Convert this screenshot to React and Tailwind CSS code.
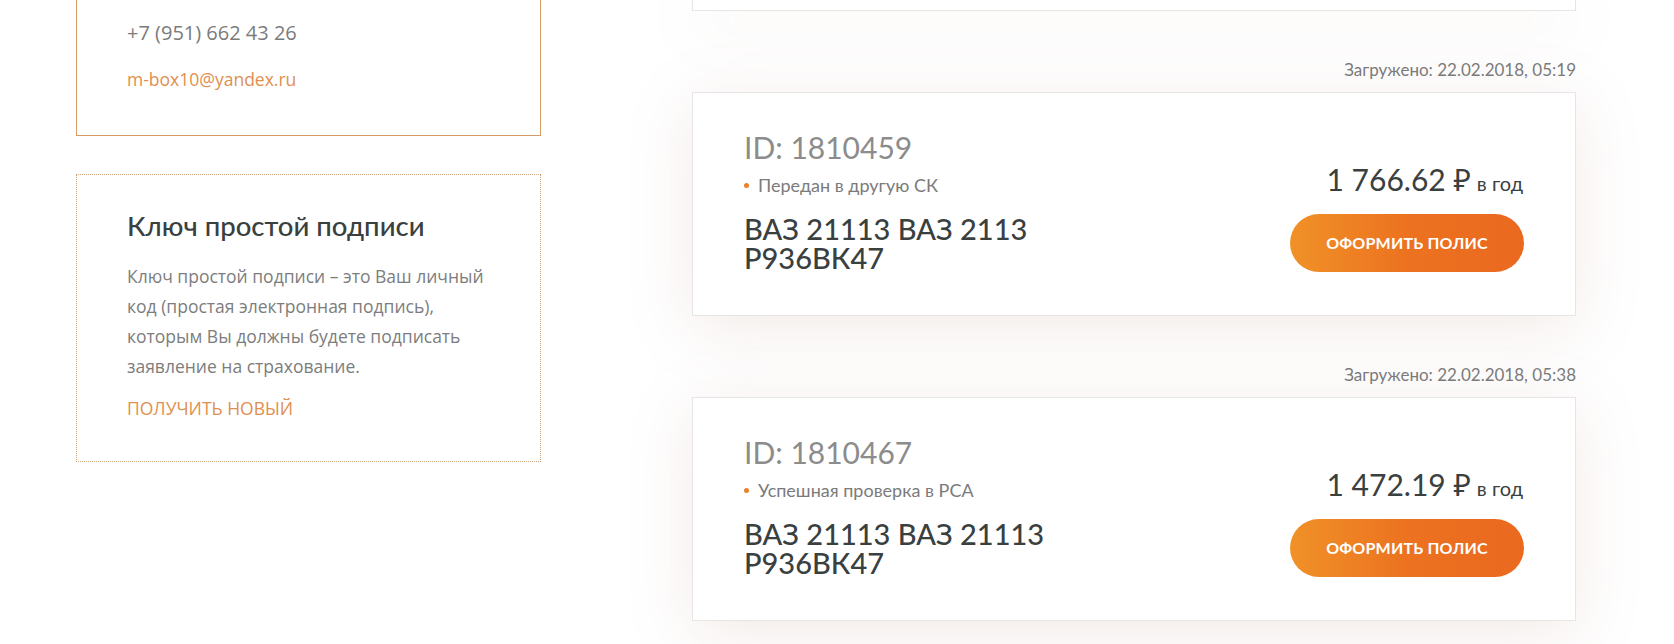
import React from 'react';

const FUTURA = "font-['Lato','Noto_Sans',sans-serif]";
const OPEN = "font-['Open_Sans','Noto_Sans',sans-serif]";

const POLICIES = [
  {
    uploaded: 'Загружено: 22.02.2018, 05:19',
    id: '1810459',
    status: 'Передан в другую СК',
    car: 'ВАЗ 21113 ВАЗ 2113 Р936ВК47',
    price: '1 766.62',
  },
  {
    uploaded: 'Загружено: 22.02.2018, 05:38',
    id: '1810467',
    status: 'Успешная проверка в РСА',
    car: 'ВАЗ 21113 ВАЗ 21113 Р936ВК47',
    price: '1 472.19',
  },
];

const cardShadow = 'shadow-[0_12px_60px_rgba(180,130,110,0.17)]';

function PolicyCard({ policy }) {
  return (
    <>
      <div className={`mt-[47px] mb-[10px] text-right text-[17px] leading-[24px] text-[#7a7a7a] ${FUTURA}`}>
        {policy.uploaded}
      </div>
      <div className={`h-[224px] flex items-end justify-between border border-[#e6e6e6] bg-white px-[51px] pb-[43px] ${cardShadow}`}>
        <div className={`${FUTURA}`}>
          <div className="text-[30px] leading-[36px] text-[#8c8c8c]">ID: {policy.id}</div>
          <div className="mt-[8px] flex items-center text-[18px] leading-[24px] text-[#7b7b7b]">
            <span className="mr-[9px] h-[5px] w-[5px] rounded-full bg-[#e8822a]" />
            {policy.status}
          </div>
          <div className="mt-[17px] max-w-[330px] text-[29px] leading-[29px] font-medium text-[#3a4040]">
            {policy.car}
          </div>
        </div>
        <div className={`flex flex-col items-end ${FUTURA}`}>
          <div className="mr-[1px] text-[30px] leading-[36px] text-[#3a4040]">
            {policy.price} ₽<span className="ml-[6px] text-[20px]">в год</span>
          </div>
          <button className="mt-[13px] h-[58px] w-[234px] rounded-full bg-gradient-to-r from-[#f09127] via-[#ec7220] to-[#ea691f] text-[16px] font-bold tracking-[0.2px] text-white">
            ОФОРМИТЬ ПОЛИС
          </button>
        </div>
      </div>
    </>
  );
}

export default function App() {
  return (
    <div className="min-h-[644px] overflow-hidden bg-white flex pl-[76px] pr-[98px]">
      <div className="w-[465px] shrink-0">
        <div className={`h-[136px] border border-t-0 border-[#d49b63] pl-[50px] pt-[20px] ${OPEN}`}>
          <div className="text-[20px] leading-[26px] text-[#7b7b7b]">+7 (951) 662 43 26</div>
          <div className="mt-[21px] text-[17.5px] leading-[24px] text-[#df8f50]">m-box10@yandex.ru</div>
        </div>
        <div className="mt-[38px] h-[288px] border border-dotted border-[#c9a47c] pl-[50px] pt-[34px]">
          <div className={`text-[27.5px] leading-[34px] font-medium text-[#3a4040] ${FUTURA}`}>
            Ключ простой подписи
          </div>
          <p className={`mt-[18px] max-w-[375px] text-[17.5px] leading-[30px] text-[#7d7d7d] ${OPEN}`}>
            Ключ простой подписи – это Ваш личный код (простая электронная подпись), которым Вы должны будете подписать заявление на страхование.
          </p>
          <a className={`mt-[15px] block text-[17.5px] leading-[24px] text-[#df8f50] ${OPEN}`}>ПОЛУЧИТЬ НОВЫЙ</a>
        </div>
      </div>
      <div className="ml-[151px] flex-1">
        <div className={`h-[11px] border border-t-0 border-[#e6e6e6] bg-white ${cardShadow}`} />
        {POLICIES.map((p) => (
          <PolicyCard key={p.id} policy={p} />
        ))}
      </div>
    </div>
  );
}
